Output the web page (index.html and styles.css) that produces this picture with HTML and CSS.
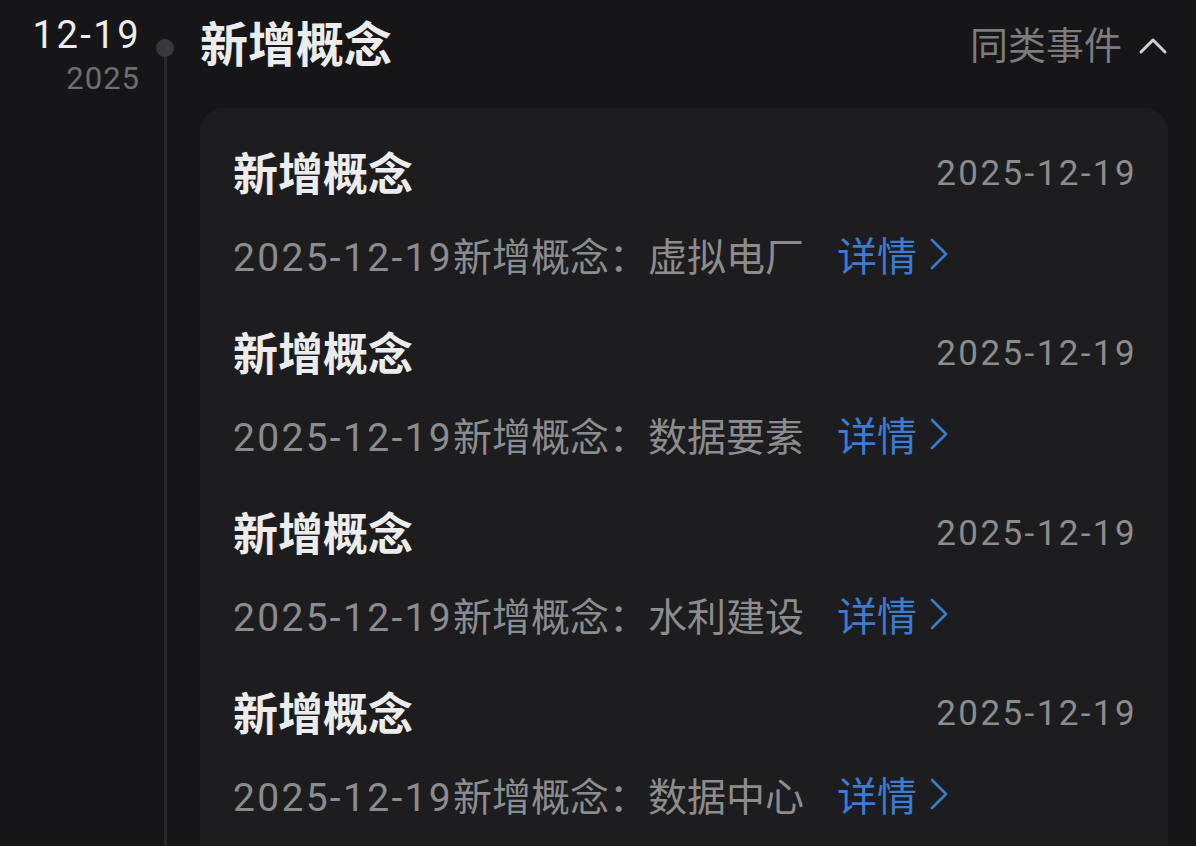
FILE: index.html
```html
<!DOCTYPE html>
<html lang="zh-CN">
<head>
<meta charset="utf-8">
<title>新增概念</title>
<link rel="stylesheet" href="styles.css">
</head>
<body>
<div class="timeline">
  <div class="date-col">
    <div class="md">12-19</div>
    <div class="yr">2025</div>
  </div>
  <div class="rail">
    <span class="dot"></span>
    <span class="line"></span>
  </div>
  <div class="main">
    <div class="head">
      <h1 class="head-title">新增概念</h1>
      <div class="similar">同类事件
        <svg class="up" width="30" height="20" viewBox="0 0 30 20"><polyline points="3,16 15,4 27,16" fill="none" stroke="#d0d0d0" stroke-width="3" stroke-linecap="round" stroke-linejoin="round"/></svg>
      </div>
    </div>
    <div class="card">
      <div class="item">
        <div class="item-top"><span class="item-title">新增概念</span><span class="item-date">2025-12-19</span></div>
        <div class="item-desc"><span><span class="num">2025-12-19</span>新增概念：虚拟电厂</span><a class="more">详情<svg width="20" height="34" viewBox="0 0 20 34"><polyline points="3,3 17,17 3,31" fill="none" stroke="#3c7bd0" stroke-width="2.6" stroke-linecap="round" stroke-linejoin="round"/></svg></a></div>
      </div>
      <div class="item">
        <div class="item-top"><span class="item-title">新增概念</span><span class="item-date">2025-12-19</span></div>
        <div class="item-desc"><span><span class="num">2025-12-19</span>新增概念：数据要素</span><a class="more">详情<svg width="20" height="34" viewBox="0 0 20 34"><polyline points="3,3 17,17 3,31" fill="none" stroke="#3c7bd0" stroke-width="2.6" stroke-linecap="round" stroke-linejoin="round"/></svg></a></div>
      </div>
      <div class="item">
        <div class="item-top"><span class="item-title">新增概念</span><span class="item-date">2025-12-19</span></div>
        <div class="item-desc"><span><span class="num">2025-12-19</span>新增概念：水利建设</span><a class="more">详情<svg width="20" height="34" viewBox="0 0 20 34"><polyline points="3,3 17,17 3,31" fill="none" stroke="#3c7bd0" stroke-width="2.6" stroke-linecap="round" stroke-linejoin="round"/></svg></a></div>
      </div>
      <div class="item">
        <div class="item-top"><span class="item-title">新增概念</span><span class="item-date">2025-12-19</span></div>
        <div class="item-desc"><span><span class="num">2025-12-19</span>新增概念：数据中心</span><a class="more">详情<svg width="20" height="34" viewBox="0 0 20 34"><polyline points="3,3 17,17 3,31" fill="none" stroke="#3c7bd0" stroke-width="2.6" stroke-linecap="round" stroke-linejoin="round"/></svg></a></div>
      </div>
    </div>
  </div>
</div>
</body>
</html>
```
FILE: styles.css
```css
html, body {
  margin: 0;
  padding: 0;
  background: #161618;
  height: 100%;
  overflow: hidden;
}
body {
  font-family: Roboto, "Noto Sans CJK SC", sans-serif;
  color: #e8e8e8;
}
.timeline {
  display: flex;
  align-items: stretch;
  height: 846px;
  overflow: hidden;
}
.date-col {
  width: 140px;
  text-align: right;
  padding-top: 15px;
  flex: none;
}
.md {
  font-size: 38px;
  line-height: 40px;
  color: #ececec;
  letter-spacing: 2.5px;
  margin-right: -1px;
}
.yr {
  font-size: 31px;
  line-height: 36px;
  margin-top: 6px;
  color: #6e6e70;
  letter-spacing: 1px;
}
.rail {
  width: 50px;
  flex: none;
  display: flex;
  flex-direction: column;
  align-items: center;
  padding-top: 39px;
  margin-right: 10px;
}
.dot {
  width: 18px;
  height: 18px;
  border-radius: 50%;
  background: #39393b;
  flex: none;
}
.line {
  width: 3px;
  flex: 1;
  background: #2a2a2c;
}
.main {
  flex: 1;
  padding-right: 28px;
}
.head {
  display: flex;
  justify-content: space-between;
  align-items: center;
  height: 92px;
}
.head-title {
  margin: 0;
  font-size: 48px;
  font-weight: 700;
  color: #ececec;
  line-height: 1;
}
.similar {
  display: flex;
  align-items: center;
  gap: 16px;
  font-size: 38px;
  color: #7c7c7e;
  line-height: 1;
}
.card {
  margin-top: 16px;
  background: #1d1d1f;
  border-radius: 24px 24px 0 0;
  padding: 25px 33px 0 33px;
  min-height: 760px;
}
.item {
  height: 180px;
}
.item-top {
  display: flex;
  justify-content: space-between;
  align-items: center;
  height: 76px;
}
.item-title {
  font-size: 45px;
  font-weight: 700;
  color: #ececec;
}
.item-date {
  font-size: 35px;
  color: #8c8c8e;
  letter-spacing: 2.4px;
  margin-right: -2px;
  position: relative;
  top: 2px;
}
.item-desc {
  display: flex;
  align-items: center;
  height: 60px;
  margin-top: 15px;
  font-size: 39px;
  color: #8c8c8e;
  gap: 33px;
}
.num {
  letter-spacing: 2.3px;
}
.more {
  display: flex;
  align-items: center;
  gap: 12px;
  font-size: 40px;
  color: #3c7bd0;
}
```
